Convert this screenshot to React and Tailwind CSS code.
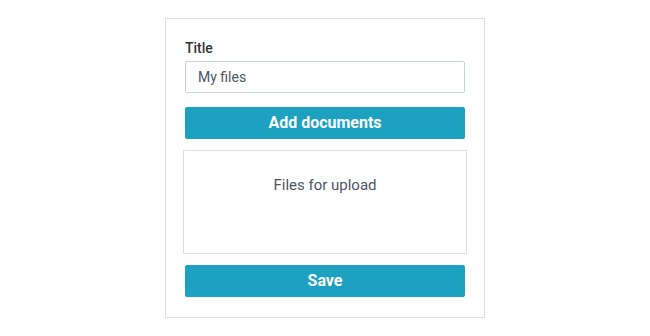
import React, { useState } from 'react';

const App = () => {
  const [title, setTitle] = useState('My files');

  return (
    <div className="w-[650px] h-[336px] bg-white flex justify-center font-['Roboto',sans-serif]">
      <div className="mt-[18px] w-[320px] h-[300px] border border-[#dadde1] px-[19px] pt-[19px] flex flex-col">
        <label className="text-[14px] font-medium text-[#333] leading-[20px] mb-[3px]">Title</label>
        <input
          type="text"
          value={title}
          onChange={(e) => setTitle(e.target.value)}
          className="h-[32px] w-full border border-[#c8d3de] rounded-[2px] px-[12px] text-[14px] text-[#4a5666] outline-none"
        />
        <button className="mt-[14px] h-[32px] w-full bg-[#1ca1c1] rounded-[2px] text-white text-[16px] font-bold">
          Add documents
        </button>
        <div className="-mx-[2px] mt-[11px] h-[104px] border border-[#dadde1] flex justify-center pt-[24px]">
          <span className="text-[15px] text-[#4a5666] leading-[20px]">Files for upload</span>
        </div>
        <button className="mt-[11px] h-[32px] w-full bg-[#1ca1c1] rounded-[2px] text-white text-[16px] font-bold">
          Save
        </button>
      </div>
    </div>
  );
};

export default App;
